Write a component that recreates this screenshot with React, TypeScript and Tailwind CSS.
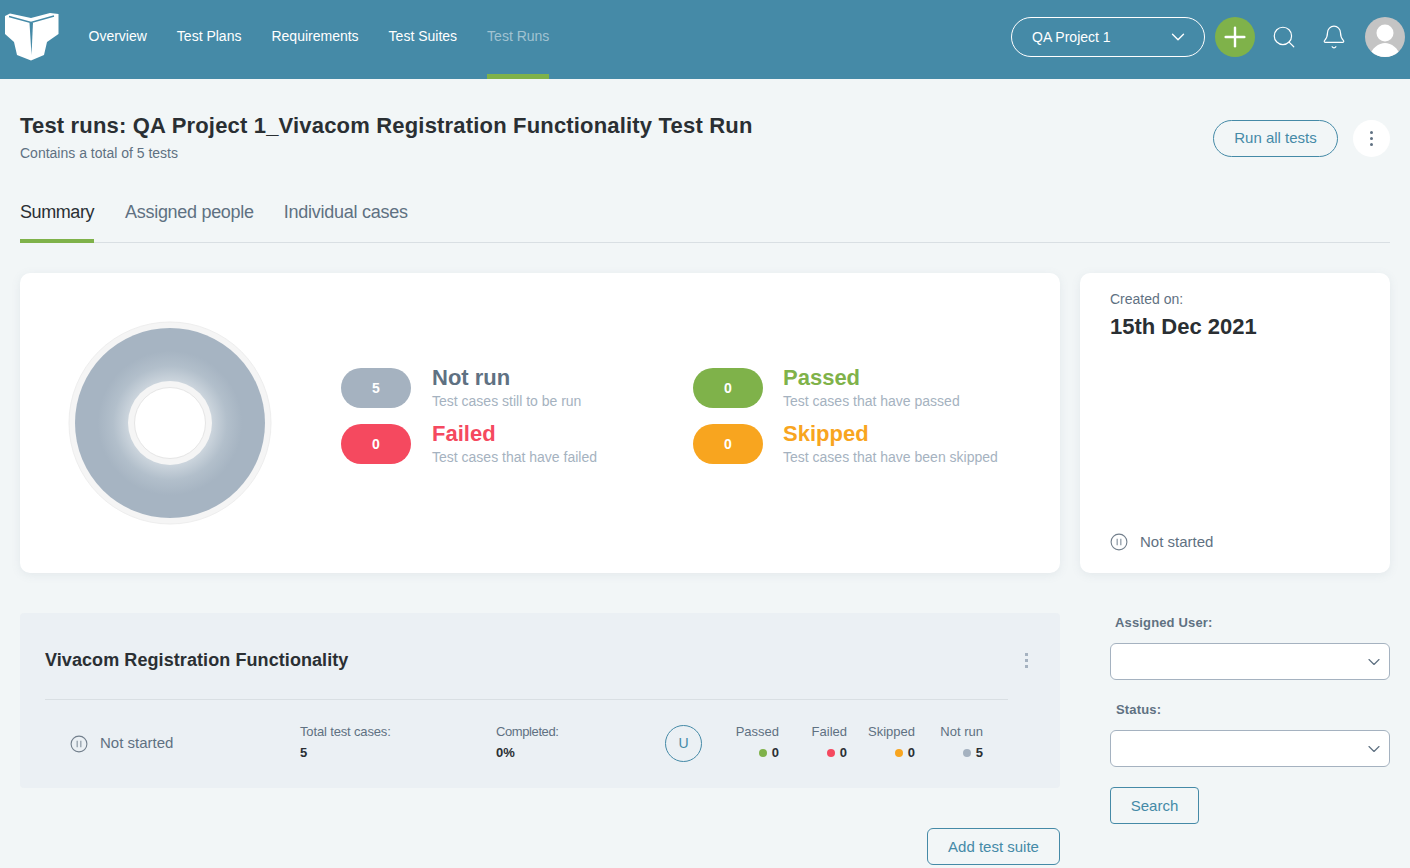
import React from 'react';
import { ChevronDown, Search, Bell, Plus } from 'lucide-react';

const navLinks = ['Overview', 'Test Plans', 'Requirements', 'Test Suites', 'Test Runs'];

const Logo = () => (
  <svg width="56" height="48" viewBox="4 13 56 48" className="mb-[5px] shrink-0">
    <path
      d="M5 16 L10 13.5 L31 18 L50 13 L58.5 14 L58.5 34 L47 42 L44 55 L31 60.5 L17 55 L14 42 L5 34 Z"
      fill="#ffffff"
    />
    <path d="M9 16.5 L31 22.5 L54 16" fill="none" stroke="#458aa7" strokeWidth="1.3" />
    <path d="M29.5 22.5 L33 22.5 L31.5 55 Z" fill="#458aa7" />
  </svg>
);

const Avatar = () => (
  <svg width="40" height="40" viewBox="0 0 40 40">
    <clipPath id="avatar-clip">
      <circle cx="20" cy="20" r="20" />
    </clipPath>
    <g clipPath="url(#avatar-clip)">
      <rect width="40" height="40" fill="#c4c4c4" />
      <circle cx="20" cy="16" r="8.5" fill="#ffffff" />
      <path d="M5 40 C6 31 14 26 20 26 C26 26 34 31 35 40 Z" fill="#ffffff" />
    </g>
  </svg>
);

const Donut = () => (
  <svg width="204" height="204" viewBox="0 0 204 204" className="shrink-0">
    <defs>
      <radialGradient id="donut-fill" cx="50%" cy="50%" r="50%">
        <stop offset="0.44" stopColor="#ccd5dd" />
        <stop offset="0.6" stopColor="#b2bfcb" />
        <stop offset="0.76" stopColor="#a6b4c2" />
        <stop offset="1" stopColor="#a6b4c2" />
      </radialGradient>
    </defs>
    <circle cx="102" cy="102" r="101" fill="#f5f5f5" stroke="#eeeeee" strokeWidth="1" />
    <circle cx="102" cy="102" r="95" fill="url(#donut-fill)" />
    <circle cx="102" cy="102" r="42" fill="#f5f5f5" />
    <circle cx="102" cy="102" r="35.5" fill="#ffffff" stroke="#e6e6e6" strokeWidth="1" />
  </svg>
);

const PauseIcon = () => (
  <svg width="18" height="18" viewBox="0 0 18 18" className="shrink-0">
    <circle cx="9" cy="9" r="7.9" fill="none" stroke="#727f8c" strokeWidth="1.1" />
    <path d="M7.2 5.8 V12.2 M10.8 5.8 V12.2" stroke="#9aa5b0" strokeWidth="1.4" />
  </svg>
);

const legend = [
  { count: 5, title: 'Not run', sub: 'Test cases still to be run', pill: 'bg-[#a5b2c0]', text: 'text-[#5f7182]', gap: 'ml-[21px]' },
  { count: 0, title: 'Passed', sub: 'Test cases that have passed', pill: 'bg-[#7fb24a]', text: 'text-[#7fb24a]', gap: 'ml-[20px]' },
  { count: 0, title: 'Failed', sub: 'Test cases that have failed', pill: 'bg-[#f5495f]', text: 'text-[#f5495f]', gap: 'ml-[21px]' },
  { count: 0, title: 'Skipped', sub: 'Test cases that have been skipped', pill: 'bg-[#f8a51f]', text: 'text-[#f8a51f]', gap: 'ml-[20px]' },
];

const tallies = [
  { label: 'Passed', value: 0, dot: 'bg-[#7fb24a]', width: 'w-[42px]' },
  { label: 'Failed', value: 0, dot: 'bg-[#f5495f]', width: 'w-[68px]' },
  { label: 'Skipped', value: 0, dot: 'bg-[#f8a51f]', width: 'w-[68px]' },
  { label: 'Not run', value: 5, dot: 'bg-[#a5b2c0]', width: 'w-[68px]' },
];

const SelectBox = () => (
  <div className="flex h-[37px] items-center justify-end rounded-md border border-[#a5b2c0] bg-white pr-[5px]">
    <ChevronDown size={20} color="#5f7182" strokeWidth={1.4} />
  </div>
);

export default function App() {
  return (
    <div className="min-h-screen bg-[#f2f6f7] font-['Liberation_Sans',Arial,sans-serif]">
      <header className="flex h-[79px] items-center bg-[#458aa7] pl-[4px] pr-[5px] text-white">
        <Logo />
        <nav className="ml-[28.5px] flex h-full gap-[30px] text-[14px]">
          {navLinks.map(link => (
            <a
              key={link}
              className={
                link === 'Test Runs'
                  ? 'flex h-full items-center border-b-[5px] border-[#7fb24a] pb-[2px] text-[#a1c3d2]'
                  : 'flex h-full items-center border-b-[5px] border-transparent pb-[2px]'
              }
            >
              {link}
            </a>
          ))}
        </nav>
        <div className="mb-[5px] ml-auto flex items-center">
          <div className="flex h-[40px] w-[194px] items-center justify-between rounded-full border border-white pl-[20px] pr-[15px] text-[14px]">
            <span>QA Project 1</span>
            <ChevronDown size={22} strokeWidth={1.5} />
          </div>
          <div className="ml-[10px] flex h-[40px] w-[40px] items-center justify-center rounded-full bg-[#7fb24a]">
            <Plus size={32} strokeWidth={1.8} />
          </div>
          <Search size={26} strokeWidth={1.1} className="ml-[16px]" />
          <Bell size={26} strokeWidth={1.1} className="ml-[24px]" />
          <div className="ml-[18px]">
            <Avatar />
          </div>
        </div>
      </header>

      <main className="px-[20px]">
        <div className="flex items-start justify-between pt-[34px]">
          <div>
            <h1 className="text-[22px] font-bold leading-[26px] tracking-[0.18px] text-[#2a2f33]">
              Test runs: QA Project 1_Vivacom Registration Functionality Test Run
            </h1>
            <p className="mt-[4px] text-[14px] leading-[20px] text-[#5f7182]">Contains a total of 5 tests</p>
          </div>
          <div className="mt-[7px] flex items-center gap-[15px]">
            <button className="h-[37px] w-[125px] rounded-full border border-[#458aa7] text-[15px] text-[#458aa7]">
              Run all tests
            </button>
            <button className="flex h-[37px] w-[37px] flex-col items-center justify-center gap-[3px] rounded-full bg-white">
              <span className="h-[3px] w-[3px] rounded-full bg-[#5f7182]" />
              <span className="h-[3px] w-[3px] rounded-full bg-[#5f7182]" />
              <span className="h-[3px] w-[3px] rounded-full bg-[#5f7182]" />
            </button>
          </div>
        </div>

        <div className="mt-[24px] flex h-[56px] gap-[30px] border-b border-[#d9dfe3] text-[18px] tracking-[-0.3px]">
          <div className="-mb-px mr-[1px] flex h-[56px] items-center border-b-[4px] border-[#7fb24a] pb-[2px] tracking-[-0.42px] text-[#2a2f33]">Summary</div>
          <div className="flex h-[56px] items-center border-b-[4px] border-transparent pb-[2px] text-[#5f7182]">Assigned people</div>
          <div className="flex h-[56px] items-center border-b-[4px] border-transparent pb-[2px] tracking-[-0.25px] text-[#5f7182]">Individual cases</div>
        </div>

        <div className="mt-[30px] grid grid-cols-[1040px_310px] gap-x-[20px]">
          <section className="flex h-[300px] items-center rounded-[10px] bg-white pl-[48px] shadow-[0_2px_10px_rgba(120,140,160,0.12)]">
            <Donut />
            <div className="mb-[14px] ml-[69px] grid grid-cols-[352px_auto] gap-y-[16px]">
              {legend.map(item => (
                <div key={item.title} className="flex h-[40px] items-center">
                  <div className={`flex h-[40px] w-[70px] items-center justify-center rounded-full text-[14px] font-bold text-white ${item.pill}`}>
                    {item.count}
                  </div>
                  <div className={item.gap}>
                    <div className={`text-[22px] font-bold leading-[24px] ${item.text}`}>{item.title}</div>
                    <div className="mt-[2px] text-[14px] leading-[18px] text-[#a5b2c0]">{item.sub}</div>
                  </div>
                </div>
              ))}
            </div>
          </section>

          <aside className="flex h-[300px] flex-col rounded-[10px] bg-white px-[30px] pb-[20px] pt-[18px] shadow-[0_2px_10px_rgba(120,140,160,0.12)]">
            <div className="text-[14px] leading-[17px] text-[#5f7182]">Created on:</div>
            <div className="mt-[6px] text-[22px] font-bold leading-[26px] text-[#2a2f33]">15th Dec 2021</div>
            <div className="mt-auto flex items-center gap-[12px] text-[15px] text-[#5f7182]">
              <PauseIcon />
              <span>Not started</span>
            </div>
          </aside>

          <div className="mt-[40px]">
            <section className="h-[175px] rounded-[4px] bg-[#ebf0f4] pl-[25px] pr-[25px]">
              <div className="flex">
                <div className="flex h-[87px] flex-1 items-center border-b border-[#d9dfe3] pt-[8px]">
                  <h2 className="text-[18px] font-bold tracking-[0.08px] text-[#2a2f33]">Vivacom Registration Functionality</h2>
                </div>
                <div className="ml-[17px] mr-[7px] flex h-[87px] flex-col justify-center gap-[3px] pt-[8px]">
                  <span className="h-[3px] w-[3px] bg-[#a5b2c0]" />
                  <span className="h-[3px] w-[3px] bg-[#a5b2c0]" />
                  <span className="h-[3px] w-[3px] bg-[#a5b2c0]" />
                </div>
              </div>
              <div className="flex items-center pt-[25px]">
                <div className="flex w-[255px] items-center gap-[12px] pl-[25px] text-[15px] text-[#5f7182]">
                  <PauseIcon />
                  <span>Not started</span>
                </div>
                <div className="-mt-[3px] w-[196px] text-[13px] text-[#5f7182]">
                  <div className="leading-[16px] tracking-[-0.15px]">Total test cases:</div>
                  <div className="mt-[5px] font-bold leading-[16px] text-[#2a2f33]">5</div>
                </div>
                <div className="-mt-[3px] w-[169px] text-[13px] text-[#5f7182]">
                  <div className="leading-[16px] tracking-[-0.4px]">Completed:</div>
                  <div className="mt-[5px] font-bold leading-[16px] text-[#2a2f33]">0%</div>
                </div>
                <div className="flex h-[37px] w-[37px] items-center justify-center rounded-full border border-[#458aa7] text-[14px] text-[#458aa7]">U</div>
                <div className="-mt-[3px] ml-[35px] flex">
                  {tallies.map(t => (
                    <div key={t.label} className={`flex flex-col items-end text-[13px] text-[#5f7182] ${t.width}`}>
                      <div className="whitespace-nowrap leading-[16px]">{t.label}</div>
                      <div className="mt-[5px] flex items-center gap-[5px] leading-[16px]">
                        <span className={`h-[8px] w-[8px] rounded-full ${t.dot}`} />
                        <span className="font-bold text-[#2a2f33]">{t.value}</span>
                      </div>
                    </div>
                  ))}
                </div>
              </div>
            </section>
            <div className="mt-[40px] flex justify-end">
              <button className="h-[37px] w-[133px] rounded-[6px] border border-[#458aa7] pt-[1px] text-[15px] text-[#458aa7]">Add test suite</button>
            </div>
          </div>

          <aside className="mt-[40px] pl-[30px]">
            <div className="pl-[5px] pt-[2px] text-[13px] font-bold leading-[16px] tracking-[0.15px] text-[#5f7182]">Assigned User:</div>
            <div className="mt-[12px]"><SelectBox /></div>
            <div className="mt-[22px] pl-[6px] text-[13px] font-bold leading-[16px] tracking-[0.15px] text-[#5f7182]">Status:</div>
            <div className="mt-[12px]"><SelectBox /></div>
            <button className="mt-[20px] h-[37px] w-[89px] rounded-[4px] border border-[#458aa7] pt-[1px] text-[15px] text-[#458aa7]">Search</button>
          </aside>
        </div>
      </main>
    </div>
  );
}
